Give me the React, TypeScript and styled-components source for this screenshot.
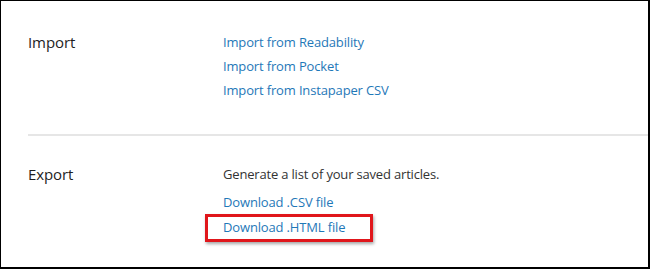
import styled, { createGlobalStyle } from "styled-components";

const GlobalStyle = createGlobalStyle`
  html, body {
    margin: 0;
    padding: 0;
    background: #ffffff;
  }
  body {
    font-family: "Open Sans", "Noto Sans", Arial, sans-serif;
  }
`;

const Frame = styled.div`
  box-sizing: border-box;
  width: 650px;
  height: 269px;
  border-top: 1px solid #000;
  border-left: 1px solid #000;
  border-right: 2px solid #000;
  border-bottom: 2px solid #000;
  background: #fff;
  overflow: hidden;
`;

const Section = styled.section<{ top: number; bottom: number }>`
  display: grid;
  grid-template-columns: 195px 1fr;
  padding: ${(p) => p.top}px 0 ${(p) => p.bottom}px 27px;
`;

const Divider = styled.hr`
  margin: 0 0 0 27px;
  border: none;
  border-top: 2px solid #e6e6e6;
  height: 0;
`;

const Heading = styled.h3`
  margin: 0;
  font-size: 15px;
  font-weight: 400;
  line-height: 24px;
  letter-spacing: -0.1px;
  color: #1e1e1e;
`;

const Column = styled.div`
  display: flex;
  flex-direction: column;
`;

const Note = styled.p`
  margin: 0 0 4px;
  font-size: 13px;
  line-height: 24px;
  letter-spacing: -0.18px;
  color: #333;
`;

const LinkItem = styled.a<{ gap?: number }>`
  position: relative;
  align-self: flex-start;
  font-size: 13px;
  line-height: 24px;
  letter-spacing: -0.15px;
  margin-bottom: ${(p) => p.gap ?? 0}px;
  color: #1f78b8;
  text-decoration: none;
  cursor: pointer;
`;

const Highlight = styled.span`
  position: absolute;
  left: -18px;
  top: -1px;
  width: 168px;
  height: 28px;
  box-sizing: border-box;
  border: 3px solid #e0161b;
  box-shadow: 1px 2px 3px rgba(0, 0, 0, 0.35);
  pointer-events: none;
`;

const App = () => {
  return (
    <>
      <GlobalStyle />
      <Frame>
        <Section top={29} bottom={32}>
          <Heading>Import</Heading>
          <Column>
            <LinkItem>Import from Readability</LinkItem>
            <LinkItem>Import from Pocket</LinkItem>
            <LinkItem>Import from Instapaper CSV</LinkItem>
          </Column>
        </Section>
        <Divider />
        <Section top={26} bottom={0}>
          <Heading>Export</Heading>
          <Column>
            <Note>Generate a list of your saved articles.</Note>
            <LinkItem gap={1}>Download .CSV file</LinkItem>
            <LinkItem>
              Download .HTML file
              <Highlight />
            </LinkItem>
          </Column>
        </Section>
      </Frame>
    </>
  );
};

export default App;
